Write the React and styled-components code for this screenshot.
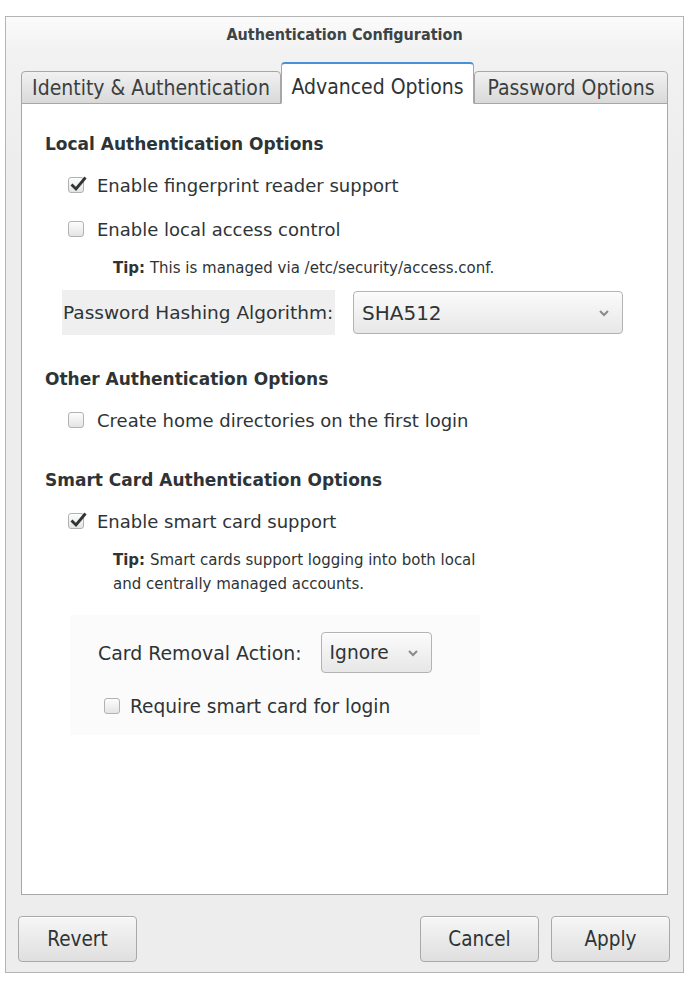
import React, { useState } from 'react';
import styled, { createGlobalStyle } from 'styled-components';

const GlobalStyle = createGlobalStyle`
  body {
    margin: 0;
    background: #ffffff;
    font-family: "DejaVu Sans", "Noto Sans", sans-serif;
    color: #2e3436;
  }
`;

// Title, tabs and buttons use the narrow face
const condensed = `
  font-family: "DejaVu Sans Condensed", "DejaVu Sans", sans-serif;
  font-stretch: condensed;
`;

const Window = styled.div`
  margin: 16px 0 0 5px;
  width: 677px;
  height: 955px;
  border: 1px solid #b4b4b4;
  background: #ededed;
  display: flex;
  flex-direction: column;
`;

const TitleBar = styled.div`
  ${condensed}
  height: 34px;
  display: flex;
  align-items: center;
  justify-content: center;
  font-size: 16px;
  font-weight: bold;
  color: #3c4446;
  background: linear-gradient(#fbfbfb, #f2f2f2);
`;

const Body = styled.div`
  flex: 1;
  padding: 11px 15px 0;
  display: flex;
  flex-direction: column;
  background: linear-gradient(#f2f2f2, #ededed 120px);
`;

const TabRow = styled.div`
  display: grid;
  grid-template-columns: 260px 193px 1fr;
  align-items: end;
  height: 42px;
  position: relative;
  z-index: 1;
  margin-bottom: -1px;
`;

const Tab = styled.div`
  ${condensed}
  font-size: 21px;
  white-space: nowrap;
  display: flex;
  align-items: center;
  justify-content: center;
  border: 1px solid #a7a7a7;
  border-radius: 4px 4px 0 0;
  color: ${(p) => (p.$active ? '#2e3436' : '#3a3f40')};
  height: ${(p) => (p.$active ? '42px' : '33px')};
  padding-top: ${(p) => (p.$active ? '6px' : '0')};
  box-sizing: border-box;
  background: ${(p) => (p.$active ? '#ffffff' : 'linear-gradient(#f1f1f1, #d9d9d9)')};
  border-top: ${(p) => (p.$active ? '2px solid #4a90d9' : '1px solid #a7a7a7')};
  border-bottom: ${(p) => (p.$active ? '1px solid #ffffff' : '1px solid #a7a7a7')};
`;

const Panel = styled.div`
  height: 792px;
  box-sizing: border-box;
  border: 1px solid #a7a7a7;
  background: #ffffff;
  padding: 26px 0 0 23px;
  font-size: 18px;
  white-space: nowrap;
`;

const Heading = styled.div`
  font-size: 17px;
  font-weight: bold;
  line-height: 28px;
  color: #2e3436;
  margin: ${(p) => p.$top || 0}px 0 5px;
`;

const CheckRow = styled.label`
  display: flex;
  align-items: center;
  height: ${(p) => p.$height || 44}px;
  margin-left: ${(p) => p.$indent ?? 23}px;
  margin-top: ${(p) => p.$top || 0}px;
  gap: ${(p) => p.$gap || 13}px;
  font-size: ${(p) => p.$size || 18}px;
  cursor: default;
`;

const Box = styled.span`
  position: relative;
  width: 14px;
  height: 14px;
  border: 1px solid #b2b2b2;
  border-radius: 3px;
  background: linear-gradient(#fdfdfd, #e4e4e4);
  flex-shrink: 0;
`;

const Tick = styled.svg`
  position: absolute;
  left: 0px;
  top: -3px;
`;

const Tip = styled.div`
  margin: 5px 0 0 68px;
  font-size: 15px;
  line-height: 24px;
  color: #2e3436;

  b {
    font-weight: bold;
  }
`;

const FieldRow = styled.div`
  display: flex;
  align-items: center;
  margin: ${(p) => p.$top || 0}px 0 0 ${(p) => p.$indent || 0}px;
  gap: ${(p) => p.$gap || 18}px;
  font-size: ${(p) => p.$size || 18}px;
`;

const FieldLabel = styled.div`
  height: 45px;
  display: flex;
  align-items: center;
  padding: 0 1px;
  background: ${(p) => (p.$shaded ? '#efefef' : 'transparent')};
  width: ${(p) => (p.$width ? `${p.$width}px` : 'auto')};
  box-sizing: border-box;
`;

const Combo = styled.div`
  width: ${(p) => p.$width}px;
  height: ${(p) => p.$height}px;
  box-sizing: border-box;
  border: 1px solid #b3b3b3;
  border-radius: 4px;
  background: linear-gradient(#fbfbfb, #e7e7e7);
  display: flex;
  align-items: center;
  justify-content: space-between;
  padding: 0 12px 0 8px;
  font-size: ${(p) => p.$size || 20}px;
  color: #2e3436;
  box-shadow: 0 1px 0 rgba(255, 255, 255, 0.8) inset;
`;

const CardGroup = styled.div`
  margin: 19px 0 0 25px;
  width: 410px;
  padding: 17px 0 14px;
  background: #fbfbfb;
`;

const Footer = styled.div`
  display: flex;
  align-items: center;
  margin: 0 -2px 0 -3px;
  padding-top: 21px;
  gap: 12px;
`;

const Button = styled.button`
  ${condensed}
  width: 119px;
  height: 46px;
  font-size: 20.5px;
  color: #2e3436;
  border: 1px solid #a9a9a9;
  border-radius: 4px;
  background: linear-gradient(#f6f6f6, #dfdfdf);
  box-shadow: 0 1px 0 rgba(255, 255, 255, 0.9) inset;
  margin-left: ${(p) => (p.$push ? 'auto' : '0')};
  padding: 0;
`;

const Chevron = () => (
  <svg width="12" height="8" viewBox="0 0 12 8">
    <path d="M2 2 L6 6 L10 2" fill="none" stroke="#8a8a8a" strokeWidth="2" />
  </svg>
);

const Check = ({ checked, onToggle, label, ...rest }) => (
  <CheckRow {...rest} onClick={onToggle}>
    <Box>
      {checked && (
        <Tick width="19" height="17" viewBox="0 0 19 17">
          <path d="M2.5 9.5 L7 14 L16.5 2.5" fill="none" stroke="#2e3436" strokeWidth="2.8" />
        </Tick>
      )}
    </Box>
    <span>{label}</span>
  </CheckRow>
);

const tabs = ['Identity & Authentication', 'Advanced Options', 'Password Options'];

export default function App() {
  const [active, setActive] = useState(1);
  const [opts, setOpts] = useState({
    fingerprint: true,
    access: false,
    homedir: false,
    smartcard: true,
    requireCard: false,
  });

  const toggle = (key) => () => setOpts((o) => ({ ...o, [key]: !o[key] }));

  return (
    <>
      <GlobalStyle />
      <Window>
        <TitleBar>Authentication Configuration</TitleBar>
        <Body>
          <TabRow>
            {tabs.map((t, i) => (
              <Tab key={t} $active={i === active} onClick={() => setActive(i)}>
                {t}
              </Tab>
            ))}
          </TabRow>
          <Panel>
            <Heading>Local Authentication Options</Heading>
            <Check checked={opts.fingerprint} onToggle={toggle('fingerprint')} label="Enable fingerprint reader support" />
            <Check checked={opts.access} onToggle={toggle('access')} label="Enable local access control" />
            <Tip>
              <b>Tip:</b> This is managed via /etc/security/access.conf.
            </Tip>
            <FieldRow $top={10} $indent={17} $gap={18} $size={18.5}>
              <FieldLabel $shaded $width={273}>Password Hashing Algorithm:</FieldLabel>
              <Combo $width={270} $height={43}>
                SHA512
                <Chevron />
              </Combo>
            </FieldRow>

            <Heading $top={30}>Other Authentication Options</Heading>
            <Check checked={opts.homedir} onToggle={toggle('homedir')} label="Create home directories on the first login" />

            <Heading $top={24}>Smart Card Authentication Options</Heading>
            <Check checked={opts.smartcard} onToggle={toggle('smartcard')} label="Enable smart card support" />
            <Tip>
              <b>Tip:</b> Smart cards support logging into both local
              <br />
              and centrally managed accounts.
            </Tip>
            <CardGroup>
              <FieldRow $indent={28} $gap={19} $size={18.9}>
                <span>Card Removal Action:</span>
                <Combo $width={111} $height={41} $size={18.6}>
                  Ignore
                  <Chevron />
                </Combo>
              </FieldRow>
              <Check
                checked={opts.requireCard}
                onToggle={toggle('requireCard')}
                label="Require smart card for login"
                $indent={34}
                $top={18}
                $height={30}
                $gap={10}
                $size={18.6}
              />
            </CardGroup>
          </Panel>
          <Footer>
            <Button>Revert</Button>
            <Button $push>Cancel</Button>
            <Button>Apply</Button>
          </Footer>
        </Body>
      </Window>
    </>
  );
}
